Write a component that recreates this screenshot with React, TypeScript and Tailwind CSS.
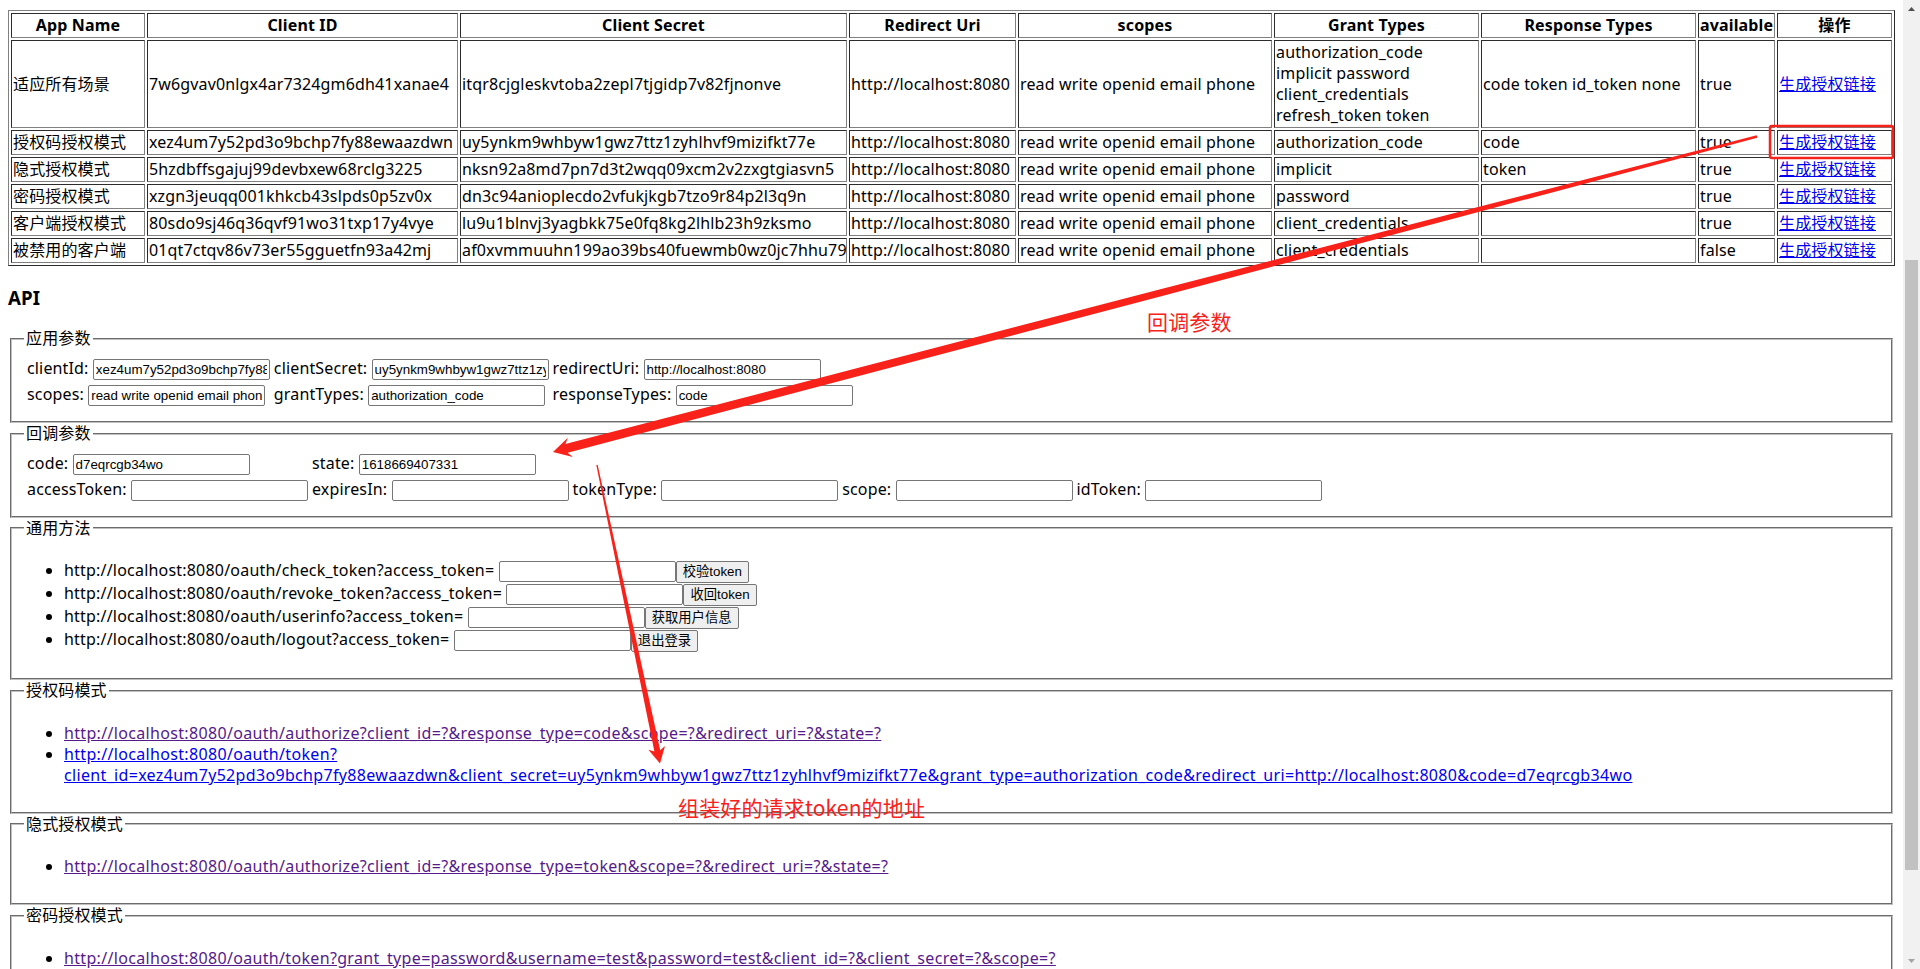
import React from "react";

type Row = {
  name: string;
  id: string;
  secret: string;
  grant: string[];
  response: string;
  available: string;
};

const rows: Row[] = [
  { name: "适应所有场景", id: "7w6gvav0nlgx4ar7324gm6dh41xanae4", secret: "itqr8cjgleskvtoba2zepl7tjgidp7v82fjnonve", grant: ["authorization_code", "implicit password", "client_credentials", "refresh_token token"], response: "code token id_token none", available: "true" },
  { name: "授权码授权模式", id: "xez4um7y52pd3o9bchp7fy88ewaazdwn", secret: "uy5ynkm9whbyw1gwz7ttz1zyhlhvf9mizifkt77e", grant: ["authorization_code"], response: "code", available: "true" },
  { name: "隐式授权模式", id: "5hzdbffsgajuj99devbxew68rclg3225", secret: "nksn92a8md7pn7d3t2wqq09xcm2v2zxgtgiasvn5", grant: ["implicit"], response: "token", available: "true" },
  { name: "密码授权模式", id: "xzgn3jeuqq001khkcb43slpds0p5zv0x", secret: "dn3c94anioplecdo2vfukjkgb7tzo9r84p2l3q9n", grant: ["password"], response: "", available: "true" },
  { name: "客户端授权模式", id: "80sdo9sj46q36qvf91wo31txp17y4vye", secret: "lu9u1blnvj3yagbkk75e0fq8kg2lhlb23h9zksmo", grant: ["client_credentials"], response: "", available: "true" },
  { name: "被禁用的客户端", id: "01qt7ctqv86v73er55gguetfn93a42mj", secret: "af0xvmmuuhn199ao39bs40fuewmb0wz0jc7hhu79", grant: ["client_credentials"], response: "", available: "false" },
];

const heads = [
  { label: "App Name", w: "w-[134px]" },
  { label: "Client ID", w: "w-[311px]" },
  { label: "Client Secret", w: "w-[387px]" },
  { label: "Redirect Uri", w: "w-[167px]" },
  { label: "scopes", w: "w-[254px]" },
  { label: "Grant Types", w: "w-[205px]" },
  { label: "Response Types", w: "w-[215px]" },
  { label: "available", w: "w-[77px]" },
  { label: "操作", w: "w-[115px]" },
];

const cell = "[border:1px_inset_#808080] p-px align-middle";

function TextInput({ value }: { value?: string }) {
  return (
    <input
      type="text"
      defaultValue={value}
      className="h-[21px] w-[177px] rounded-[2px] border border-[#767676] bg-white px-[2px] py-px font-['Liberation_Sans',Arial,sans-serif] text-[13.33px] leading-[15px] tracking-normal text-black outline-none"
    />
  );
}

function Btn({ children }: { children: React.ReactNode }) {
  return (
    <button className="h-[22px] rounded-[2px] border border-[#767676] bg-[#efefef] px-[6px] py-px font-['Liberation_Sans','Noto_Sans_CJK_SC',sans-serif] text-[13.33px] leading-[18px] tracking-normal text-black">
      {children}
    </button>
  );
}

function Box({ title, tall, children }: { title: string; tall?: boolean; children: React.ReactNode }) {
  return (
    <fieldset className={`mx-[2px] px-3 pt-[5.6px] [border:2px_groove_#c0c0c0] ${tall ? "pb-[12px]" : "pb-[10px]"}`}>
      <legend className="px-[2px]">{title}</legend>
      {children}
    </fieldset>
  );
}

function Field({ label, value }: { label: string; value?: string }) {
  return (
    <td className="p-px">
      {label}: <TextInput value={value} />
    </td>
  );
}

function Scrollbar() {
  return (
    <div className="flex h-full w-[17px] shrink-0 flex-col bg-[#f1f1f1]">
      <div className="flex h-[17px] items-center justify-center">
        <svg width="7" height="4" viewBox="0 0 7 4">
          <polygon points="3.5,0 7,4 0,4" fill="#505050" />
        </svg>
      </div>
      <div className="flex-1 px-[2px]">
        <div className="mt-[243px] h-[610px] bg-[#c1c1c1]" />
      </div>
      <div className="flex h-[17px] items-center justify-center">
        <svg width="7" height="4" viewBox="0 0 7 4">
          <polygon points="0,0 7,0 3.5,4" fill="#a3a3a3" />
        </svg>
      </div>
    </div>
  );
}

// red annotations drawn over the page (screenshot markup)
function Marks() {
  return (
    <>
      <svg className="pointer-events-none absolute left-0 top-0" width="1920" height="969">
        <rect x="1770" y="126" width="123" height="32" rx="2" fill="none" stroke="#f8221a" strokeWidth="2.5" />
        <polygon
          points="553,452 572.9,457.1 567.6,452.8 864.5,374.5 1162.2,295.9 1459.8,217 1757.3,137.7 1756.7,135.3 1458.5,212.1 1160.4,289.3 862.4,366.8 565.4,444.1 567.9,437.8"
          fill="#f8221a"
        />
        <polygon
          points="660,763.5 665,746.1 660.2,750.2 629.1,607.5 597.7,464.9 596.3,465.1 625.2,608.3 654.4,751.4 648.4,749.7"
          fill="#f8221a"
        />
      </svg>
      <span className="pointer-events-none absolute left-[1147px] top-[311px] font-['Noto_Sans_CJK_SC',sans-serif] text-[21px] leading-none text-[#f8221a]">
        回调参数
      </span>
      <span className="pointer-events-none absolute left-[678px] top-[797px] font-['Noto_Sans_CJK_SC',sans-serif] text-[21px] leading-none text-[#f8221a]">
        组装好的请求token的地址
      </span>
    </>
  );
}

const link = "underline tracking-[0.33px]";

export default function App() {
  return (
    <div className="relative flex h-screen w-full overflow-hidden bg-white font-['Noto_Sans','Noto_Sans_CJK_SC',sans-serif] text-[16px] leading-[21px] tracking-[0.15px] text-black">
      <main className="min-w-0 flex-1 overflow-hidden px-2 pt-[10px]">
        <table className="w-full table-fixed border-separate border-spacing-[2px] [border:1px_outset_#808080]">
          <thead>
            <tr>
              {heads.map((h) => (
                <th key={h.label} className={`${cell} ${h.w} text-center font-bold`}>
                  {h.label}
                </th>
              ))}
            </tr>
          </thead>
          <tbody>
            {rows.map((r) => (
              <tr key={r.id}>
                <td className={cell}>{r.name}</td>
                <td className={cell}>{r.id}</td>
                <td className={cell}>{r.secret}</td>
                <td className={cell}>http://localhost:8080</td>
                <td className={cell}>read write openid email phone</td>
                <td className={cell}>
                  {r.grant.map((g, i) => (
                    <React.Fragment key={g}>
                      {i > 0 && <br />}
                      {g}
                    </React.Fragment>
                  ))}
                </td>
                <td className={cell}>{r.response}</td>
                <td className={cell}>{r.available}</td>
                <td className={cell}>
                  <a href="#" className="text-[#0000ee] underline">生成授权链接</a>
                </td>
              </tr>
            ))}
          </tbody>
        </table>

        <h3 className="my-[18.72px] text-[18.72px] font-bold leading-[25px]">API</h3>

        <Box title="应用参数" tall>
          <table className="border-separate border-spacing-[2px]">
            <tbody>
              <tr>
                <Field label="clientId" value="xez4um7y52pd3o9bchp7fy88ewaazdwn" />
                <Field label="clientSecret" value="uy5ynkm9whbyw1gwz7ttz1zyhlhvf9mizifkt77e" />
                <Field label="redirectUri" value="http://localhost:8080" />
              </tr>
              <tr>
                <Field label="scopes" value="read write openid email phone" />
                <Field label="grantTypes" value="authorization_code" />
                <Field label="responseTypes" value="code" />
              </tr>
            </tbody>
          </table>
        </Box>

        <Box title="回调参数" tall>
          <table className="border-separate border-spacing-[2px]">
            <tbody>
              <tr>
                <Field label="code" value="d7eqrcgb34wo" />
                <Field label="state" value="1618669407331" />
              </tr>
              <tr>
                <Field label="accessToken" />
                <Field label="expiresIn" />
                <Field label="tokenType" />
                <Field label="scope" />
                <Field label="idToken" />
              </tr>
            </tbody>
          </table>
        </Box>

        <Box title="通用方法">
          <ul className="my-4 list-disc pl-10 tracking-[0.2px]">
            <li>
              http://localhost:8080/oauth/check_token?access_token= <TextInput />
              <Btn>校验token</Btn>
            </li>
            <li>
              http://localhost:8080/oauth/revoke_token?access_token= <TextInput />
              <Btn>收回token</Btn>
            </li>
            <li>
              http://localhost:8080/oauth/userinfo?access_token= <TextInput />
              <Btn>获取用户信息</Btn>
            </li>
            <li>
              http://localhost:8080/oauth/logout?access_token= <TextInput />
              <Btn>退出登录</Btn>
            </li>
          </ul>
        </Box>

        <Box title="授权码模式">
          <ul className="my-4 list-disc pl-10">
            <li>
              <a href="#" className={`${link} text-[#551a8b]`}>
                http://localhost:8080/oauth/authorize?client_id=?&amp;response_type=code&amp;scope=?&amp;redirect_uri=?&amp;state=?
              </a>
            </li>
            <li>
              <a href="#" className={`${link} text-[#0000ee]`}>
                http://localhost:8080/oauth/token?
                <br />
                client_id=xez4um7y52pd3o9bchp7fy88ewaazdwn&amp;client_secret=uy5ynkm9whbyw1gwz7ttz1zyhlhvf9mizifkt77e&amp;grant_type=authorization_code&amp;redirect_uri=http://localhost:8080&amp;code=d7eqrcgb34wo
              </a>
            </li>
          </ul>
        </Box>

        <Box title="隐式授权模式">
          <ul className="my-4 list-disc pl-10">
            <li>
              <a href="#" className={`${link} text-[#551a8b]`}>
                http://localhost:8080/oauth/authorize?client_id=?&amp;response_type=token&amp;scope=?&amp;redirect_uri=?&amp;state=?
              </a>
            </li>
          </ul>
        </Box>

        <Box title="密码授权模式">
          <ul className="my-4 list-disc pl-10">
            <li>
              <a href="#" className={`${link} text-[#551a8b]`}>
                http://localhost:8080/oauth/token?grant_type=password&amp;username=test&amp;password=test&amp;client_id=?&amp;client_secret=?&amp;scope=?
              </a>
            </li>
          </ul>
        </Box>
      </main>
      <Scrollbar />
      <Marks />
    </div>
  );
}
